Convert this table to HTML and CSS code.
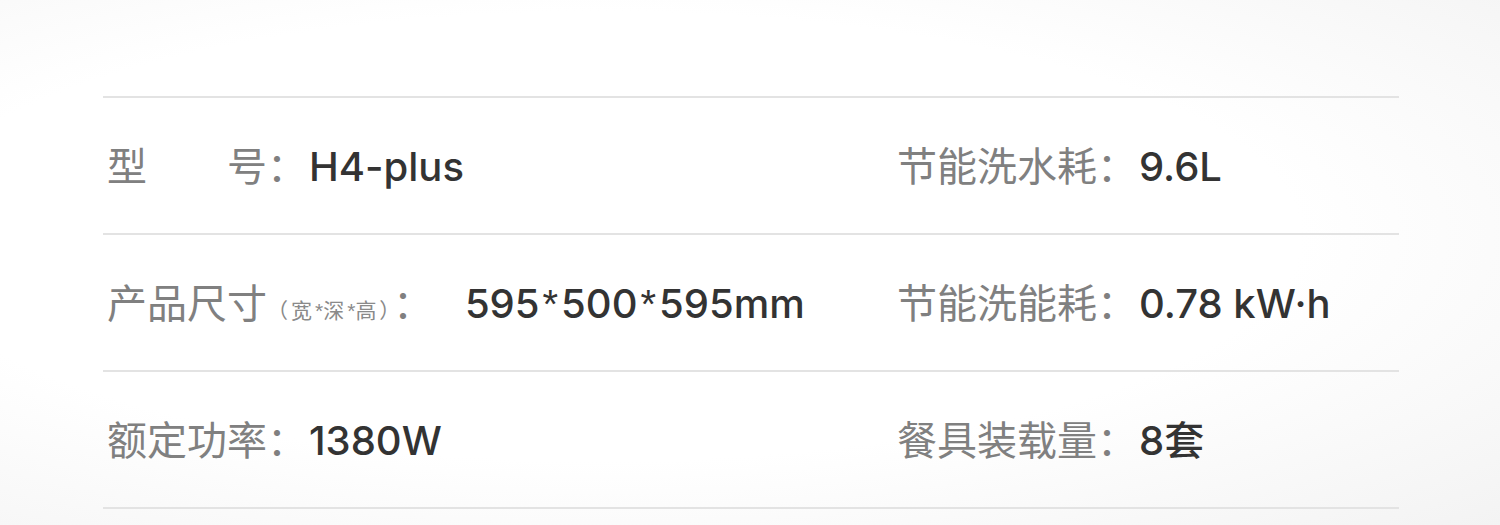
FILE: index.html
```html
<!DOCTYPE html>
<html lang="zh-CN">
<head>
  <meta charset="UTF-8" />
  <title>产品参数</title>
  <meta name="viewport" content="width=device-width, initial-scale=1.0">
  <link rel="stylesheet" href="styles.css">
</head>
<body>
  <!-- 参数表 -->
  <div class="specs">
    <div class="row">
      <div class="item">
        <span class="label">型　　号：</span><span class="value">H4-plus</span>
      </div>
      <div class="item">
        <span class="label">节能洗水耗：</span><span class="value">9.6L</span>
      </div>
    </div>
    <div class="row">
      <div class="item">
        <span class="label">产品尺寸<small class="note">（宽<span class="star">*</span>深<span class="star">*</span>高）</small>：</span><span class="value value-wide">595<span class="star">*</span>500<span class="star">*</span>595mm</span>
      </div>
      <div class="item">
        <span class="label">节能洗能耗：</span><span class="value">0.78 kW·h</span>
      </div>
    </div>
    <div class="row">
      <div class="item">
        <span class="label">额定功率：</span><span class="value">1380W</span>
      </div>
      <div class="item">
        <span class="label">餐具装载量：</span><span class="value">8套</span>
      </div>
    </div>
  </div>
</body>
</html>
```

FILE: styles.css
```css
html, body {
  height: 100%;
}

body {
  margin: 0;
  background: radial-gradient(ellipse at 40% 45%, #ffffff 55%, #f3f3f3 100%);
  font-family: "Noto Sans CJK SC", "Noto Sans", sans-serif;
  overflow: hidden;
}

.specs {
  margin: 96px 101px 0 103px;
  border-top: 2px solid #e3e3e3;
}

.row {
  display: grid;
  grid-template-columns: 790px 1fr;
  height: 132px;
  padding: 0 0 3px 4px;
  align-items: center;
  border-bottom: 2px solid #e3e3e3;
}

.item {
  display: flex;
  align-items: baseline;
  white-space: nowrap;
}

.label {
  font-size: 40px;
  color: #808080;
}

.note {
  font-size: 21px;
  color: #8a8a8a;
  letter-spacing: 3px;
}

.value {
  font-family: Inter, "Noto Sans CJK SC", sans-serif;
  font-size: 40px;
  font-weight: 500;
  color: #333333;
  margin-left: 2px;
}

.value-wide {
  margin-left: 32px;
}

/* 星号偏上，和原图一致 */
.star {
  font-family: "Liberation Sans", sans-serif;
  letter-spacing: 0;
}

.value .star {
  margin: 0 3px;
}
```
